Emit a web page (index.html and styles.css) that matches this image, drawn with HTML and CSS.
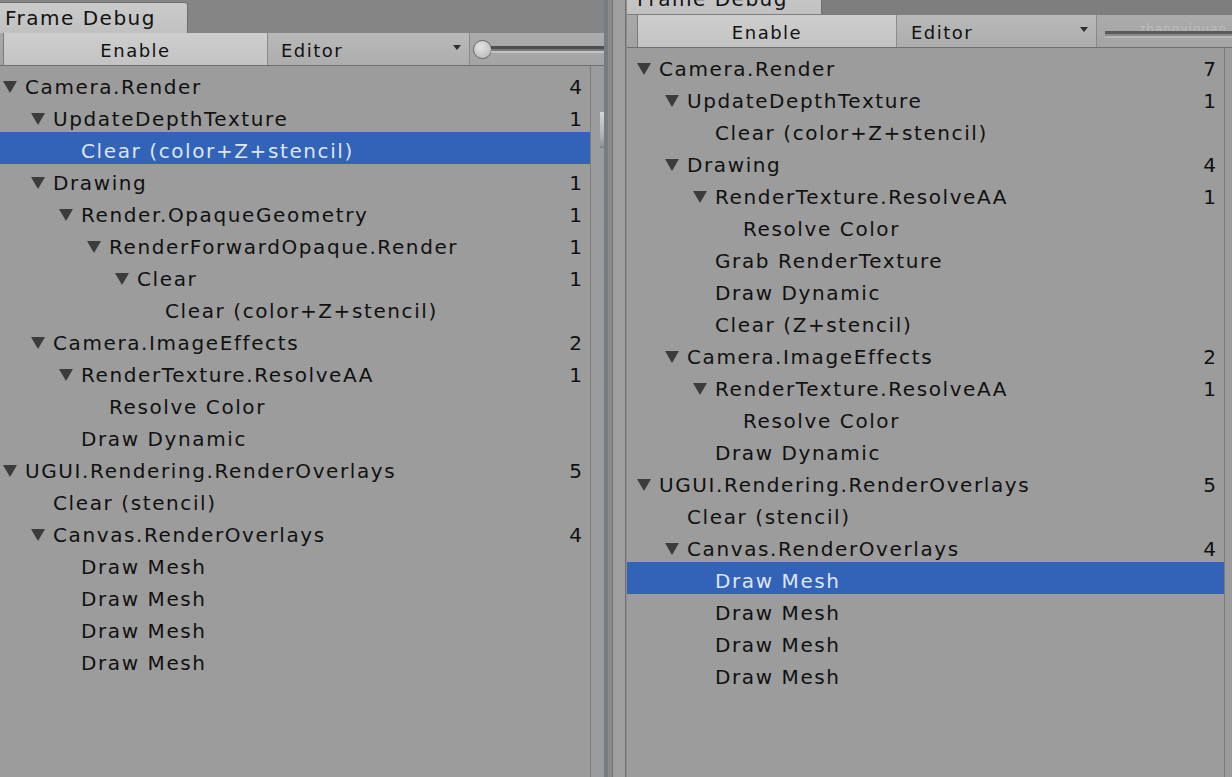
FILE: index.html
```html
<!DOCTYPE html>
<html lang="en">
<head>
<meta charset="utf-8">
<title>Frame Debug</title>
<link rel="stylesheet" href="styles.css">
</head>
<body>
<div class="app">
  <section class="pane pane-left">
    <div class="tabstrip"><div class="tab">Frame Debug</div></div>
    <div class="toolbar">
      <div class="tb-enable">Enable</div>
      <div class="tb-popup"><span>Editor</span><span class="arrow"></span></div>
      <div class="tb-slider"><span class="thumb"></span><span class="track"></span></div>
    </div>
    <div class="content">
      <div class="tree">
        <div class="row l0"><span class="tri"></span><span class="name">Camera.Render</span><span class="count">4</span></div>
        <div class="row l1"><span class="tri"></span><span class="name">UpdateDepthTexture</span><span class="count">1</span></div>
        <div class="row l2 selected"><span class="tri leaf"></span><span class="name">Clear (color+Z+stencil)</span></div>
        <div class="row l1"><span class="tri"></span><span class="name">Drawing</span><span class="count">1</span></div>
        <div class="row l2"><span class="tri"></span><span class="name">Render.OpaqueGeometry</span><span class="count">1</span></div>
        <div class="row l3"><span class="tri"></span><span class="name">RenderForwardOpaque.Render</span><span class="count">1</span></div>
        <div class="row l4"><span class="tri"></span><span class="name">Clear</span><span class="count">1</span></div>
        <div class="row l5"><span class="tri leaf"></span><span class="name">Clear (color+Z+stencil)</span></div>
        <div class="row l1"><span class="tri"></span><span class="name">Camera.ImageEffects</span><span class="count">2</span></div>
        <div class="row l2"><span class="tri"></span><span class="name">RenderTexture.ResolveAA</span><span class="count">1</span></div>
        <div class="row l3"><span class="tri leaf"></span><span class="name">Resolve Color</span></div>
        <div class="row l2"><span class="tri leaf"></span><span class="name">Draw Dynamic</span></div>
        <div class="row l0"><span class="tri"></span><span class="name">UGUI.Rendering.RenderOverlays</span><span class="count">5</span></div>
        <div class="row l1"><span class="tri leaf"></span><span class="name">Clear (stencil)</span></div>
        <div class="row l1"><span class="tri"></span><span class="name">Canvas.RenderOverlays</span><span class="count">4</span></div>
        <div class="row l2"><span class="tri leaf"></span><span class="name">Draw Mesh</span></div>
        <div class="row l2"><span class="tri leaf"></span><span class="name">Draw Mesh</span></div>
        <div class="row l2"><span class="tri leaf"></span><span class="name">Draw Mesh</span></div>
        <div class="row l2"><span class="tri leaf"></span><span class="name">Draw Mesh</span></div>
      </div>
      <div class="scrollbar"><span class="sthumb"></span></div>
    </div>
  </section>

  <div class="divider"></div>

  <section class="pane pane-right">
    <div class="tabstrip"><div class="tab">Frame Debug</div></div>
    <div class="toolbar">
      <div class="tb-enable">Enable</div>
      <div class="tb-popup"><span>Editor</span><span class="arrow"></span></div>
      <div class="tb-slider"><span class="ghost">zhangyiquan</span><span class="bar"></span></div>
    </div>
    <div class="content">
      <div class="tree">
        <div class="row l0"><span class="tri"></span><span class="name">Camera.Render</span><span class="count">7</span></div>
        <div class="row l1"><span class="tri"></span><span class="name">UpdateDepthTexture</span><span class="count">1</span></div>
        <div class="row l2"><span class="tri leaf"></span><span class="name">Clear (color+Z+stencil)</span></div>
        <div class="row l1"><span class="tri"></span><span class="name">Drawing</span><span class="count">4</span></div>
        <div class="row l2"><span class="tri"></span><span class="name">RenderTexture.ResolveAA</span><span class="count">1</span></div>
        <div class="row l3"><span class="tri leaf"></span><span class="name">Resolve Color</span></div>
        <div class="row l2"><span class="tri leaf"></span><span class="name">Grab RenderTexture</span></div>
        <div class="row l2"><span class="tri leaf"></span><span class="name">Draw Dynamic</span></div>
        <div class="row l2"><span class="tri leaf"></span><span class="name">Clear (Z+stencil)</span></div>
        <div class="row l1"><span class="tri"></span><span class="name">Camera.ImageEffects</span><span class="count">2</span></div>
        <div class="row l2"><span class="tri"></span><span class="name">RenderTexture.ResolveAA</span><span class="count">1</span></div>
        <div class="row l3"><span class="tri leaf"></span><span class="name">Resolve Color</span></div>
        <div class="row l2"><span class="tri leaf"></span><span class="name">Draw Dynamic</span></div>
        <div class="row l0"><span class="tri"></span><span class="name">UGUI.Rendering.RenderOverlays</span><span class="count">5</span></div>
        <div class="row l1"><span class="tri leaf"></span><span class="name">Clear (stencil)</span></div>
        <div class="row l1"><span class="tri"></span><span class="name">Canvas.RenderOverlays</span><span class="count">4</span></div>
        <div class="row l2 selected"><span class="tri leaf"></span><span class="name">Draw Mesh</span></div>
        <div class="row l2"><span class="tri leaf"></span><span class="name">Draw Mesh</span></div>
        <div class="row l2"><span class="tri leaf"></span><span class="name">Draw Mesh</span></div>
        <div class="row l2"><span class="tri leaf"></span><span class="name">Draw Mesh</span></div>
      </div>
      <div class="scrollbar"></div>
    </div>
  </section>
</div>
</body>
</html>
```

FILE: styles.css
```css
* { box-sizing: border-box; }

body {
  margin: 0;
  width: 1232px;
  height: 777px;
  overflow: hidden;
  background: #9c9c9c;
  font-family: "DejaVu Sans", "Verdana", sans-serif;
  color: #121212;
}

.app {
  display: flex;
  height: 777px;
}

.pane {
  display: flex;
  flex-direction: column;
  overflow: hidden;
  background: #9c9c9c;
  flex: none;
}

.pane-left { width: 604px; }
.pane-right { width: 605px; }

.divider {
  flex: none;
  width: 23px;
  background: linear-gradient(to right,
    #6c7d9f 0 1px,
    #7b7b7b 1px 4px,
    #8b8b8b 4px 8px,
    #707070 8px 9px,
    #9f9f9f 9px 21px,
    #717171 21px 22px,
    #8c8c8c 22px 23px);
}

/* ---------- tab strip ---------- */
.tabstrip {
  flex: none;
  display: flex;
  overflow: hidden;
  background: #858585;
}

.pane-left .tabstrip { height: 33px; }
.pane-right .tabstrip { height: 15px; background: #7e7e7e; }

.tab {
  flex: none;
  height: 31px;
  margin-top: 2px;
  padding: 2px 0 0 5px;
  font-size: 20px;
  letter-spacing: 1.5px;
  line-height: 27px;
  color: #121212;
  background: linear-gradient(#cbcbcb, #c0c0c0);
  border-top: 1px solid #707070;
  border-right: 1px solid #6e6e6e;
  border-top-right-radius: 4px;
  white-space: nowrap;
}

.pane-left .tab { width: 188px; }
.pane-right .tab {
  width: 196px;
  margin-top: -17px;
  margin-left: -1px;
  padding-left: 11px;
}

/* ---------- toolbar ---------- */
.toolbar {
  flex: none;
  display: flex;
  height: 33px;
  background: linear-gradient(#a9a9a9, #a2a2a2);
  border-bottom: 1px solid #6f6f6f;
}

.tb-enable {
  flex: none;
  height: 32px;
  padding-top: 4px;
  line-height: 28px;
  text-align: center;
  font-size: 18px;
  letter-spacing: 1.5px;
  background: linear-gradient(#cecece, #c3c3c3);
  border-left: 1px solid #7a7a7a;
  border-right: 1px solid #8b8b8b;
}

.pane-left .tb-enable { width: 265px; margin-left: 3px; }
.pane-right .tb-enable { width: 260px; margin-left: 10px; }

.tb-popup {
  flex: none;
  display: flex;
  justify-content: space-between;
  height: 32px;
  padding: 4px 8px 0 13px;
  line-height: 28px;
  font-size: 18px;
  letter-spacing: 1.5px;
  background: linear-gradient(#b9b9b9, #adadad);
  border-right: 1px solid #888888;
}

.pane-left .tb-popup { width: 202px; }
.pane-right .tb-popup { width: 200px; padding-left: 14px; }

.arrow {
  align-self: flex-start;
  margin-top: 8px;
  width: 0;
  height: 0;
  border-left: 4px solid transparent;
  border-right: 4px solid transparent;
  border-top: 5px solid #2e2e2e;
}

.tb-slider {
  flex: 1;
  display: flex;
  align-items: center;
  min-width: 0;
  background: linear-gradient(#ababab, #a4a4a4);
}

.thumb {
  flex: none;
  width: 19px;
  height: 19px;
  margin-left: 3px;
  border-radius: 50%;
  border: 1px solid #6a6a6a;
  background: radial-gradient(circle at 40% 35%, #e4e4e4, #b2b2b2);
}

.track {
  flex: 1;
  height: 7px;
  margin-left: -1px;
  background: linear-gradient(#4e4e4e 0 3px, #7a7a7a 3px 5px, #c2c2c2 5px 7px);
}

.pane-right .tb-slider {
  flex-direction: column;
  align-items: stretch;
  justify-content: flex-start;
  padding: 8px 0 0 8px;
}

.ghost {
  font-size: 12px;
  line-height: 12px;
  padding-left: 34px;
  letter-spacing: 1px;
  color: #bdbdbd;
  white-space: nowrap;
  margin-bottom: -4px;
}

.bar {
  height: 7px;
  background: linear-gradient(#5a5a5a 0 3px, #8a8a8a 3px 5px, #b8b8b8 5px 7px);
}

/* ---------- tree ---------- */
.content {
  flex: 1;
  display: flex;
  min-height: 0;
}

.tree {
  flex: none;
  border-right: 1px solid #7c7c7c;
  background: #9c9c9c;
}

.pane-left .tree { width: 591px; padding-top: 2px; --base: 3px; }
.pane-right .tree { width: 598px; padding-top: 2px; --base: 10px; }

.scrollbar {
  flex: none;
  width: 13px;
  background: #9c9c9c;
}

.pane-left .scrollbar {
  padding-top: 46px;
  display: flex;
  justify-content: flex-end;
  align-items: flex-start;
}

.sthumb {
  display: block;
  width: 4px;
  height: 36px;
  background: linear-gradient(#d4d4d4, #b0b0b0 70%, #8e8e8e);
  border-bottom: 1px solid #7a7a7a;
}

.row {
  display: flex;
  align-items: flex-start;
  height: 32px;
  padding-top: 6px;
  padding-right: 8px;
  line-height: 26px;
  font-size: 20px;
  letter-spacing: 1.6px;
  white-space: nowrap;
  color: #111111;
}

.row.l0 { padding-left: var(--base); }
.row.l1 { padding-left: calc(var(--base) + 28px); }
.row.l2 { padding-left: calc(var(--base) + 56px); }
.row.l3 { padding-left: calc(var(--base) + 84px); }
.row.l4 { padding-left: calc(var(--base) + 112px); }
.row.l5 { padding-left: calc(var(--base) + 140px); }

.tri {
  flex: none;
  width: 0;
  height: 0;
  margin-top: 7px;
  margin-right: 8px;
  border-left: 7px solid transparent;
  border-right: 7px solid transparent;
  border-top: 12px solid #3c3c3c;
}

.tri.leaf { visibility: hidden; }

.count {
  margin-left: auto;
  letter-spacing: 0;
}

.row.selected {
  background: #3263b8;
  color: #dfe5ee;
}
```
